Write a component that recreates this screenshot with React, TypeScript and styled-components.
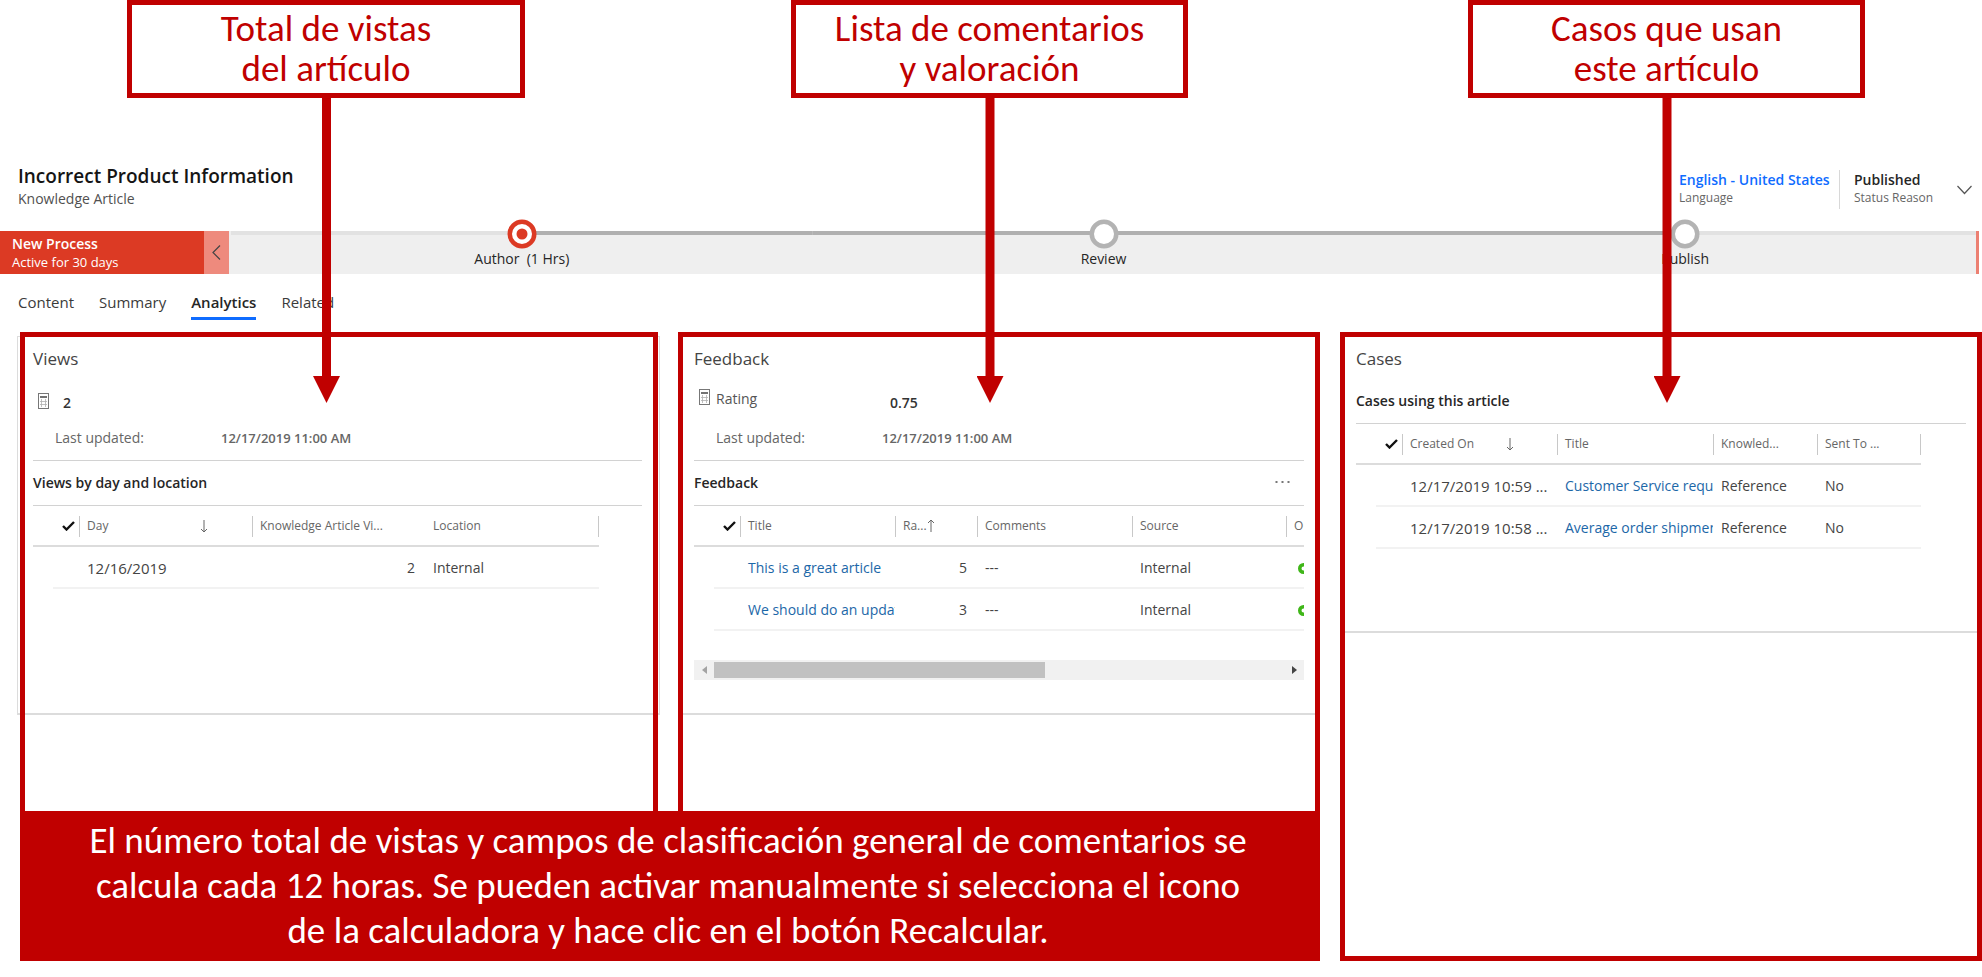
import React from 'react';
import styled, { createGlobalStyle } from 'styled-components';

const RED = '#c00000';
const BRAND = '#dc3a24';

const GlobalStyle = createGlobalStyle`
  *, *::before, *::after { box-sizing: border-box; }
  body {
    margin: 0;
    background: #fff;
    color: #3b3b3b;
    font-family: "Segoe UI", "Open Sans", sans-serif;
    font-size: 14px;
    line-height: 20px;
  }
  button { font: inherit; color: inherit; border: 0; padding: 0; background: none; cursor: pointer; }
  h1, h2, h3, p { margin: 0; font-weight: 400; }
  a { text-decoration: none; color: inherit; }
`;

const Page = styled.div`
  position: relative;
  z-index: 0;
  padding-bottom: 16px;
  overflow-x: hidden;
`;

/* Callouts */

const CalloutRow = styled.div`
  position: relative;
  z-index: 2;
  display: grid;
  grid-template-columns: 127fr 398fr 266fr 397fr 280fr 397fr 117fr;
`;

const Callout = styled.div<{ $column: number }>`
  position: relative;
  grid-column: ${p => p.$column};
  padding: 4px 0;
  border: 5px solid ${RED};
  background: #fff;
  color: ${RED};
  font-family: Calibri, Carlito, Lato, sans-serif;
  font-size: 37px;
  line-height: 40px;
  text-align: center;
  white-space: nowrap;
`;

const CalloutArrow = styled.span`
  position: absolute;
  top: 100%;
  left: calc(50% - 13px);
  width: 27px;
  height: 310px;
  background: ${RED};
  clip-path: polygon(9px 0, 18px 0, 18px 283px, 27px 283px, 50% 100%, 0 283px, 9px 283px);
  pointer-events: none;
`;

/* Record header */

const RecordHeader = styled.header`
  display: flex;
  justify-content: space-between;
  padding: 65px 10px 22px 18px;
`;

const RecordTitle = styled.h1`
  color: #151515;
  font-size: 19px;
  line-height: 26px;
  font-weight: 600;
`;

const RecordType = styled.p`
  color: #505050;
`;

const Facts = styled.div`
  display: flex;
  align-items: flex-start;
  padding-top: 7px;
`;

const Fact = styled.div<{ $width: number; $divided?: boolean }>`
  width: ${p => p.$width}px;
  height: 39px;
  padding-left: ${p => (p.$divided ? 14 : 0)}px;
  border-left: ${p => (p.$divided ? '1px solid #d8d8d8' : '0')};
  white-space: nowrap;
`;

const FactValue = styled.div`
  color: #262626;
  font-weight: 600;
  a { color: #0f6cff; }
`;

const FactLabel = styled.div`
  color: #666;
  font-size: 12px;
  line-height: 16px;
`;

const ExpandButton = styled.button`
  width: 15px;
  margin-top: 14px;
  line-height: 0;
`;

/* Business process */

const ProcessBar = styled.nav`
  display: flex;
  height: 43px;
  padding-right: 3px;
`;

const ProcessName = styled.button`
  width: 204px;
  padding: 2px 12px 1px;
  background: ${BRAND};
  color: #fff;
  text-align: left;
  line-height: 19px;
`;

const ProcessTitle = styled.strong`
  display: block;
  font-weight: 600;
`;

const ProcessAge = styled.span`
  display: block;
  font-size: 13px;
`;

const ProcessCollapse = styled.button`
  width: 25px;
  background: #ee8a7d;
  line-height: 0;
`;

const Stages = styled.ol`
  flex: 1;
  display: flex;
  margin: 0;
  padding: 0 0 0 2px;
  list-style: none;
  background: #efefef;
`;

const Stage = styled.li<{ $before: string; $after: string }>`
  flex: 1;
  background: linear-gradient(to right, ${p => p.$before} 50%, ${p => p.$after} 50%) top / 100% 4px no-repeat;
`;

const StageButton = styled.button`
  display: flex;
  flex-direction: column;
  align-items: center;
  width: 100%;
  margin-top: -12px;
  color: #262626;
  white-space: pre;
`;

const ProcessEnd = styled.span`
  width: 3px;
  background: #ec8072;
`;

/* Tabs */

const Tabs = styled.nav`
  display: flex;
  gap: 25px;
  padding: 18px 18px 12px;
  font-size: 15px;
`;

const Tab = styled.a<{ $active?: boolean }>`
  padding-bottom: 5px;
  border-bottom: 3px solid ${p => (p.$active ? '#0f6cff' : 'transparent')};
  color: ${p => (p.$active ? '#262626' : '#3b3b3b')};
  font-weight: ${p => (p.$active ? 600 : 400)};
`;

/* Panels */

const Board = styled.main`
  display: grid;
  grid-template-columns: minmax(0, 638fr) minmax(0, 642fr) minmax(0, 642fr);
  grid-template-rows: minmax(479px, auto) auto;
  column-gap: 20px;
  margin-left: 20px;
`;

const Panel = styled.div<{ $open?: boolean; $tall?: boolean }>`
  border: 5px solid ${RED};
  border-bottom-width: ${p => (p.$open ? 0 : 5)}px;
  grid-row: ${p => (p.$tall ? '1 / span 2' : '1')};
`;

const Section = styled.section<{ $height: number; $lead?: number; $outlined?: boolean }>`
  position: relative;
  min-height: ${p => p.$height}px;
  padding: 10px 11px 0 ${p => p.$lead ?? 11}px;

  &::after {
    content: "";
    position: absolute;
    z-index: -1;
    inset: ${p => (p.$outlined ? '-1px -7px 0 -8px' : '0')};
    border: solid #dcdcdc;
    border-width: ${p => (p.$outlined ? '1px 1px 2px 1px' : '0 0 2px')};
    pointer-events: none;
  }
`;

const SectionTitle = styled.h2`
  font-size: 17px;
  line-height: 24px;
  color: #444;
`;

const Summary = styled.div`
  padding: 18px 0 12px;
  border-bottom: 1px solid #d2d2d2;
`;

const SummaryRow = styled.div`
  display: flex;
  height: 24px;
`;

const IconSlot = styled.div<{ $low?: boolean }>`
  width: 22px;
  padding-left: 5px;
  align-self: ${p => (p.$low ? 'flex-end' : 'flex-start')};
  height: 20px;
`;

const IconButton = styled.button`
  display: block;
  line-height: 0;
`;

const SummaryLabel = styled.span`
  width: 166px;
  color: #555;
`;

const SummaryValue = styled.span`
  align-self: flex-end;
  padding-left: 8px;
  color: #333;
  font-weight: 600;
`;

const UpdatedRow = styled.div`
  display: flex;
  padding: 15px 0 0 22px;
  color: #666;
`;

const UpdatedLabel = styled.span`
  width: 166px;
`;

const UpdatedValue = styled.span`
  font-size: 13px;
  font-weight: 600;
`;

const GridHeading = styled.div<{ $gap: number }>`
  display: flex;
  justify-content: space-between;
  padding: ${p => p.$gap}px 14px 12px 0;
  border-bottom: 1px solid #d2d2d2;
`;

const GridTitle = styled.h3`
  font-size: 14px;
  line-height: 20px;
  font-weight: 600;
  color: #262626;
`;

const GridClip = styled.div`
  overflow: hidden;
`;

const Grid = styled.table<{ $width: number }>`
  width: ${p => p.$width}px;
  table-layout: fixed;
  border-collapse: separate;
  border-spacing: 0;
`;

const Th = styled.th<{ $plain?: boolean }>`
  height: 41px;
  padding: 0;
  border-bottom: 2px solid #dcdcdc;
  color: #666;
  font-size: 12px;
  line-height: 20px;
  font-weight: 400;
  text-align: left;
  white-space: nowrap;

  > span {
    display: flex;
    align-items: center;
    height: 21px;
    margin-top: 1px;
    padding-left: ${p => (p.$plain ? 8 : 7)}px;
    border-left: ${p => (p.$plain ? '0' : '1px solid #c8c8c8')};
  }
`;

const EndTh = styled(Th)`
  > span { border-right: 1px solid #c8c8c8; }
`;

const SelectTh = styled(Th)`
  > span { border: 0; padding: 0 4px 0 0; justify-content: flex-end; }
`;

const SortArrow = styled.svg<{ $gap: number }>`
  margin-left: ${p => p.$gap}px;
`;

const Td = styled.td<{ $kind?: 'date' | 'number' | 'link' | 'status' }>`
  height: 42px;
  padding: 2px ${p => (p.$kind === 'number' ? 10 : 0)}px 0 ${p => (p.$kind === 'status' ? 12 : 8)}px;
  border-bottom: 2px solid #f2f2f2;
  overflow: hidden;
  color: ${p => (p.$kind === 'link' ? '#1c67a8' : '#444')};
  font-size: ${p => (p.$kind === 'date' ? 15 : 14)}px;
  text-align: ${p => (p.$kind === 'number' ? 'right' : 'left')};
  white-space: nowrap;

  > svg { display: block; }
`;

const GutterTd = styled.td`
  padding: 0;
`;

const SelectTd = styled.td`
  padding: 0;
  border-bottom: 2px solid #f2f2f2;
`;

const Scroller = styled.div`
  display: flex;
  align-items: center;
  height: 20px;
  margin-top: 29px;
  background: #f1f1f1;
`;

const ScrollButton = styled.button`
  display: flex;
  align-items: center;
  justify-content: center;
  width: 20px;
  height: 20px;
`;

const ScrollTrack = styled.div`
  flex: 1;
`;

const ScrollThumb = styled.div`
  width: 58%;
  height: 16px;
  background: #c1c1c1;
`;

const Banner = styled.p`
  grid-column: 1 / span 2;
  padding: 7px 4px 8px 0;
  background: ${RED};
  color: #fff;
  font-family: Calibri, Carlito, Lato, sans-serif;
  font-size: 37px;
  line-height: 45px;
  text-align: center;
`;

/* Icons */

const Calculator = () => (
  <svg width="11" height="16" viewBox="0 0 11 16" aria-hidden="true">
    <rect x="0.5" y="0.5" width="10" height="15" fill="#fff" stroke="#777" />
    <path d="M2 4h7" stroke="#444" strokeWidth="1.500" />
    <path d="M3.500 6v8M7.500 6v8M2 8.500h7M2 11.500h7" stroke="#b0b0b0" strokeWidth="0.800" />
  </svg>
);

const Check = () => (
  <svg width="13" height="10" viewBox="0 0 13 10" aria-hidden="true">
    <path d="M1 5l3.500 3.500L12 1" fill="none" stroke="#111" strokeWidth="2.400" />
  </svg>
);

const Sort = ({ up, gap }: { up?: boolean; gap: number }) => (
  <SortArrow $gap={gap} width="8" height="14" viewBox="0 0 8 14" aria-hidden="true">
    <path d={up ? 'M4 13V1M1 4l3-3 3 3' : 'M4 1v12M1 10l3 3 3-3'} fill="none" stroke="#666" />
  </SortArrow>
);

const StageMark = ({ active }: { active?: boolean }) => (
  <svg width="30" height="30" viewBox="0 0 30 30" aria-hidden="true">
    <circle cx="15" cy="15" r="12.250" fill="#fff" stroke={active ? BRAND : '#b3b3b3'} strokeWidth="4.500" />
    {active && <circle cx="15" cy="15" r="5.500" fill={BRAND} />}
  </svg>
);

const StatusRing = () => (
  <svg width="11" height="11" viewBox="0 0 11 11" role="img" aria-label="Open">
    <circle cx="5.500" cy="5.500" r="3.750" fill="none" stroke="#3fb618" strokeWidth="3.500" />
  </svg>
);

const Columns = ({ widths }: { widths: number[] }) => (
  <colgroup>
    <col width="20" />
    <col width="26" />
    {widths.map((w, i) => (
      <col key={i} width={w} />
    ))}
  </colgroup>
);

const SelectHeader = () => (
  <SelectTh colSpan={2} scope="col" aria-label="Select all">
    <span>
      <IconButton type="button" aria-label="Select all">
        <Check />
      </IconButton>
    </span>
  </SelectTh>
);

const LastUpdated = () => (
  <UpdatedRow>
    <UpdatedLabel>Last updated:</UpdatedLabel>
    <UpdatedValue>12/17/2019 11:00 AM</UpdatedValue>
  </UpdatedRow>
);

const feedback = [
  { title: 'This is a great article', rating: 5 },
  { title: 'We should do an updat', rating: 3 },
];

const cases = [
  { created: '12/17/2019 10:59 ...', title: 'Customer Service reque' },
  { created: '12/17/2019 10:58 ...', title: 'Average order shipmen' },
];

const LINE = '#b0b0b0';
const PALE = '#e2e2e2';

export default function App() {
  return (
    <Page>
      <GlobalStyle />
      <CalloutRow>
        <Callout $column={2}>
          Total de vistas
          <br />
          del artículo
          <CalloutArrow />
        </Callout>
        <Callout $column={4}>
          Lista de comentarios
          <br />y valoración
          <CalloutArrow />
        </Callout>
        <Callout $column={6}>
          Casos que usan
          <br />
          este artículo
          <CalloutArrow />
        </Callout>
      </CalloutRow>

      <RecordHeader>
        <div>
          <RecordTitle>Incorrect Product Information</RecordTitle>
          <RecordType>Knowledge Article</RecordType>
        </div>
        <Facts>
          <Fact $width={160}>
            <FactValue>
              <a href="#language">English - United States</a>
            </FactValue>
            <FactLabel>Language</FactLabel>
          </Fact>
          <Fact $width={118} $divided>
            <FactValue>Published</FactValue>
            <FactLabel>Status Reason</FactLabel>
          </Fact>
          <ExpandButton type="button" aria-label="Show more">
            <svg width="15" height="12" viewBox="0 0 15 12" aria-hidden="true">
              <path d="M0.500 2l7 7.500 7-7.500" fill="none" stroke="#555" strokeWidth="1.200" />
            </svg>
          </ExpandButton>
        </Facts>
      </RecordHeader>

      <ProcessBar aria-label="Process">
        <ProcessName type="button">
          <ProcessTitle>New Process</ProcessTitle>
          <ProcessAge>Active for 30 days</ProcessAge>
        </ProcessName>
        <ProcessCollapse type="button" aria-label="Previous stage">
          <svg width="9" height="15" viewBox="0 0 9 15" aria-hidden="true">
            <path d="M8 0.500l-7 7 7 7" fill="none" stroke="#444" strokeWidth="1.200" />
          </svg>
        </ProcessCollapse>
        <Stages>
          <Stage $before={PALE} $after={LINE}>
            <StageButton type="button">
              <StageMark active />
              {'Author  (1 Hrs)'}
            </StageButton>
          </Stage>
          <Stage $before={LINE} $after={LINE}>
            <StageButton type="button">
              <StageMark />
              Review
            </StageButton>
          </Stage>
          <Stage $before={LINE} $after={PALE}>
            <StageButton type="button">
              <StageMark />
              Publish
            </StageButton>
          </Stage>
        </Stages>
        <ProcessEnd />
      </ProcessBar>

      <Tabs aria-label="Form tabs">
        <Tab href="#content">Content</Tab>
        <Tab href="#summary">Summary</Tab>
        <Tab href="#analytics" $active aria-current="page">
          Analytics
        </Tab>
        <Tab href="#related">Related</Tab>
      </Tabs>

      <Board>
        <Panel $open>
          <Section $height={378} $lead={8} $outlined>
            <SectionTitle>Views</SectionTitle>
            <Summary>
              <SummaryRow>
                <IconSlot $low>
                  <IconButton type="button" aria-label="Recalculate views">
                    <Calculator />
                  </IconButton>
                </IconSlot>
                <SummaryValue>2</SummaryValue>
              </SummaryRow>
              <LastUpdated />
            </Summary>
            <GridHeading $gap={12}>
              <GridTitle>Views by day and location</GridTitle>
            </GridHeading>
            <GridClip>
              <Grid $width={566}>
                <Columns widths={[173, 173, 174]} />
                <thead>
                  <tr>
                    <SelectHeader />
                    <Th scope="col">
                      <span>
                        Day
                        <Sort gap={92} />
                      </span>
                    </Th>
                    <Th scope="col">
                      <span>Knowledge Article Vi...</span>
                    </Th>
                    <EndTh scope="col" $plain>
                      <span>Location</span>
                    </EndTh>
                  </tr>
                </thead>
                <tbody>
                  <tr>
                    <GutterTd />
                    <SelectTd />
                    <Td $kind="date">12/16/2019</Td>
                    <Td $kind="number">2</Td>
                    <Td>Internal</Td>
                  </tr>
                </tbody>
              </Grid>
            </GridClip>
          </Section>
        </Panel>

        <Panel $open>
          <Section $height={378}>
            <SectionTitle>Feedback</SectionTitle>
            <Summary>
              <SummaryRow>
                <IconSlot>
                  <IconButton type="button" aria-label="Recalculate rating">
                    <Calculator />
                  </IconButton>
                </IconSlot>
                <SummaryLabel>Rating</SummaryLabel>
                <SummaryValue>0.75</SummaryValue>
              </SummaryRow>
              <LastUpdated />
            </Summary>
            <GridHeading $gap={12}>
              <GridTitle>Feedback</GridTitle>
              <IconButton type="button" aria-label="More commands">
                <svg width="15" height="6" viewBox="0 0 15 6" aria-hidden="true">
                  <path d="M0.500 1h2v2h-2zM6.500 1h2v2h-2zM12.500 1h2v2h-2z" fill="#777" />
                </svg>
              </IconButton>
            </GridHeading>
            <GridClip>
              <Grid $width={747}>
                <Columns widths={[155, 82, 155, 154, 155]} />
                <thead>
                  <tr>
                    <SelectHeader />
                    <Th scope="col">
                      <span>Title</span>
                    </Th>
                    <Th scope="col">
                      <span>
                        Ra...
                        <Sort up gap={0} />
                      </span>
                    </Th>
                    <Th scope="col">
                      <span>Comments</span>
                    </Th>
                    <Th scope="col">
                      <span>Source</span>
                    </Th>
                    <Th scope="col">
                      <span>O</span>
                    </Th>
                  </tr>
                </thead>
                <tbody>
                  {feedback.map(row => (
                    <tr key={row.title}>
                      <GutterTd />
                      <SelectTd />
                      <Td $kind="link">
                        <a href="#feedback">{row.title}</a>
                      </Td>
                      <Td $kind="number">{row.rating}</Td>
                      <Td>---</Td>
                      <Td>Internal</Td>
                      <Td $kind="status">
                        <StatusRing />
                      </Td>
                    </tr>
                  ))}
                </tbody>
              </Grid>
            </GridClip>
            <Scroller>
              <ScrollButton type="button" aria-label="Scroll left">
                <svg width="5" height="8" viewBox="0 0 5 8" aria-hidden="true">
                  <path d="M5 0v8L0 4z" fill="#a3a3a3" />
                </svg>
              </ScrollButton>
              <ScrollTrack>
                <ScrollThumb />
              </ScrollTrack>
              <ScrollButton type="button" aria-label="Scroll right">
                <svg width="5" height="8" viewBox="0 0 5 8" aria-hidden="true">
                  <path d="M0 0v8l5-4z" fill="#444" />
                </svg>
              </ScrollButton>
            </Scroller>
          </Section>
        </Panel>

        <Panel $tall>
          <Section $height={296}>
            <SectionTitle>Cases</SectionTitle>
            <GridHeading $gap={20}>
              <GridTitle>Cases using this article</GridTitle>
            </GridHeading>
            <GridClip>
              <Grid $width={565}>
                <Columns widths={[155, 156, 104, 104]} />
                <thead>
                  <tr>
                    <SelectHeader />
                    <Th scope="col">
                      <span>
                        Created On
                        <Sort gap={32} />
                      </span>
                    </Th>
                    <Th scope="col">
                      <span>Title</span>
                    </Th>
                    <Th scope="col">
                      <span>Knowled...</span>
                    </Th>
                    <EndTh scope="col">
                      <span>Sent To ...</span>
                    </EndTh>
                  </tr>
                </thead>
                <tbody>
                  {cases.map(row => (
                    <tr key={row.created}>
                      <GutterTd />
                      <SelectTd />
                      <Td $kind="date">{row.created}</Td>
                      <Td $kind="link">
                        <a href="#case">{row.title}</a>
                      </Td>
                      <Td>Reference</Td>
                      <Td>No</Td>
                    </tr>
                  ))}
                </tbody>
              </Grid>
            </GridClip>
          </Section>
        </Panel>

        <Banner>
          El número total de vistas y campos de clasificación general de comentarios se
          <br />
          calcula cada 12 horas. Se pueden activar manualmente si selecciona el icono
          <br />
          de la calculadora y hace clic en el botón Recalcular.
        </Banner>
      </Board>
    </Page>
  );
}
